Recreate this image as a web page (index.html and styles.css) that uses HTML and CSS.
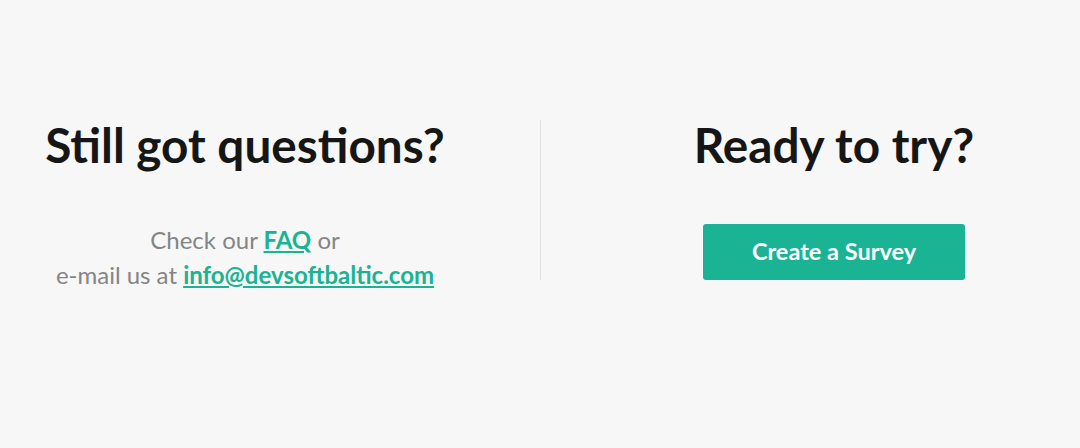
FILE: index.html
```html
<!DOCTYPE html>
<html lang="en">
<head>
<meta charset="utf-8">
<title>Questions</title>
<link rel="stylesheet" href="styles.css">
</head>
<body>
<section class="cta">
  <div class="col col-left">
    <h2 class="title">Still got questions?</h2>
    <p class="text">Check our <a href="#" class="link">FAQ</a> or<br>e-mail us at <a href="#" class="link">info@devsoftbaltic.com</a></p>
  </div>
  <div class="divider"></div>
  <div class="col col-right">
    <h2 class="title">Ready to try?</h2>
    <a href="#" class="btn">Create a Survey</a>
  </div>
</section>
</body>
</html>
```
FILE: styles.css
```css
html, body {
  margin: 0;
  padding: 0;
}
body {
  background: #f7f7f7;
  font-family: Lato, "Open Sans", sans-serif;
  width: 1080px;
  height: 448px;
  overflow: hidden;
}
.cta {
  display: flex;
  align-items: flex-start;
  padding-top: 116px;
}
.col {
  text-align: center;
  box-sizing: border-box;
}
.col-left {
  flex: 0 0 540px;
  padding-right: 50px;
}
.col-right {
  flex: 1;
  padding-left: 47px;
  display: flex;
  flex-direction: column;
  align-items: center;
}
.divider {
  flex: 0 0 1px;
  height: 160px;
  margin-top: 4px;
  background: #e3e3e3;
}
.title {
  margin: 0;
  font-size: 47.7px;
  line-height: 57.6px;
  font-weight: 700;
  color: #161616;
}
.text {
  margin: 48px 0 0;
  font-size: 24px;
  line-height: 35px;
  color: #858585;
}
.link {
  color: #1ab394;
  font-weight: 700;
  text-decoration: underline;
}
.btn {
  margin-top: 50px;
  width: 262px;
  height: 56px;
  padding-bottom: 2px;
  box-sizing: border-box;
  display: flex;
  align-items: center;
  justify-content: center;
  background: #1ab394;
  border-radius: 3px;
  color: #ffffff;
  font-size: 23.5px;
  font-weight: 700;
  text-decoration: none;
}
```
